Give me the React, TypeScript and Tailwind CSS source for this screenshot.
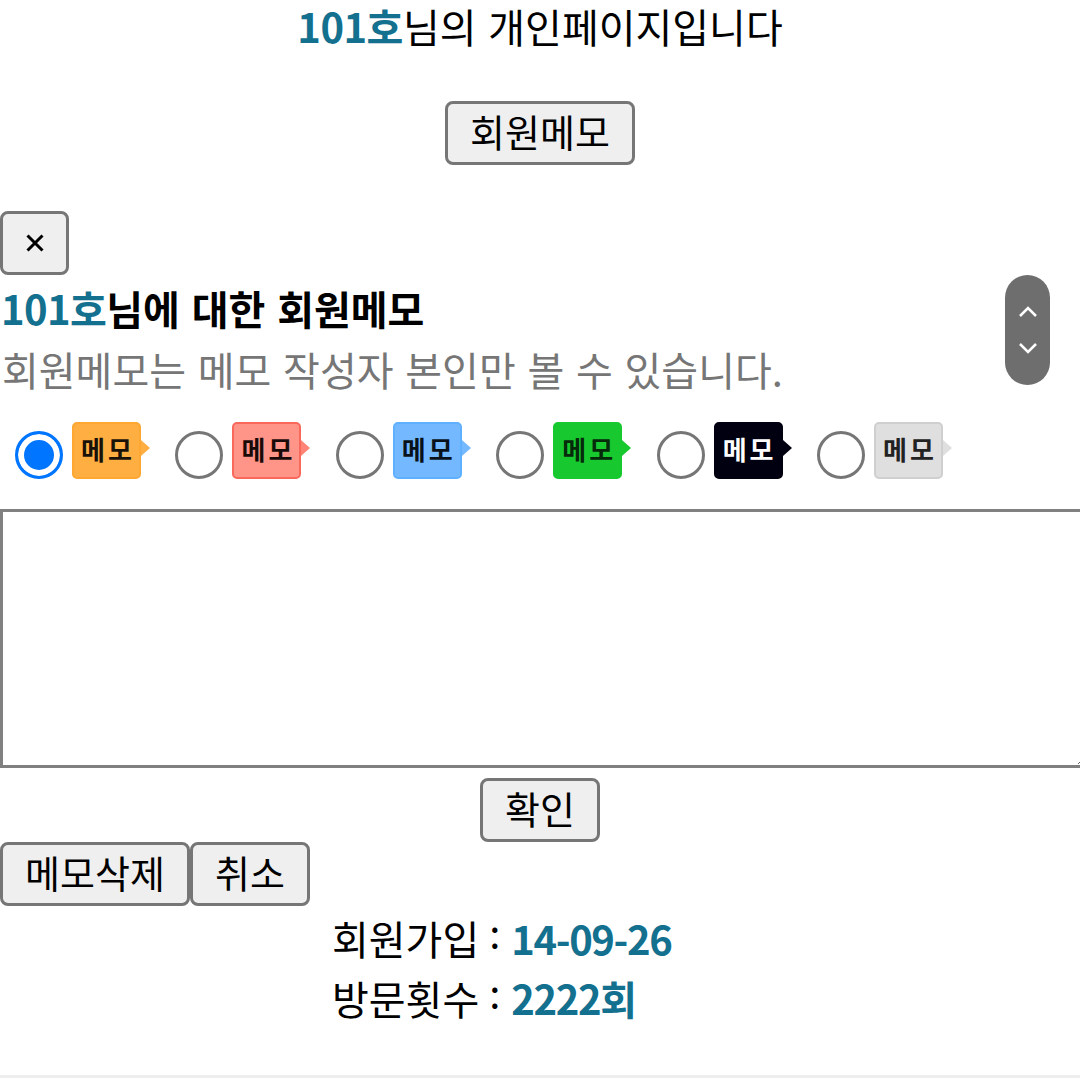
const FONT = "font-['Noto_Sans_CJK_KR','Noto_Sans',sans-serif]";

const memoTypes = [
  { bg: 'bg-[#ffae42]', border: 'border-[#ffa733]', arrow: 'border-l-[#ffae42]', text: 'text-[#1a1208]' },
  { bg: 'bg-[#ff9488]', border: 'border-[#f8695c]', arrow: 'border-l-[#ff8476]', text: 'text-[#1a0a08]' },
  { bg: 'bg-[#74b9ff]', border: 'border-[#5fb0ff]', arrow: 'border-l-[#74b9ff]', text: 'text-[#08121c]' },
  { bg: 'bg-[#17c92f]', border: 'border-[#17c92f]', arrow: 'border-l-[#17c92f]', text: 'text-[#062b0b]' },
  { bg: 'bg-[#000010]', border: 'border-[#000010]', arrow: 'border-l-[#000010]', text: 'text-white' },
  { bg: 'bg-[#dfdfdf]', border: 'border-[#cfcfcf]', arrow: 'border-l-[#dfdfdf]', text: 'text-[#222222]' },
];

function Btn({ children, className = '' }: { children: React.ReactNode; className?: string }) {
  return (
    <button className={`h-[64px] pb-[5px] border-[3px] border-[#767676] rounded-[8px] bg-[#efefef] text-black text-[38px] leading-none ${className}`}>
      {children}
    </button>
  );
}

function InfoRow({ label, value }: { label: string; value: string }) {
  return (
    <div className="flex items-center h-[60px] pb-[5px]">
      <span>{label}</span>
      <span className="ml-[10px] mr-[11px] text-[40px] leading-[30px] pb-[14px]">:</span>
      <span className="font-bold tracking-[-1.4px] text-[#13708f]">{value}</span>
    </div>
  );
}

export default function App() {
  return (
    <div className={`${FONT} relative w-[1080px] h-[1080px] overflow-hidden bg-white text-black [word-spacing:2.8px]`}>
      <div className="h-[56px] pb-[5px] flex items-center justify-center text-[40px] leading-[48px]">
        <span className="font-bold text-[#13708f] tracking-[-0.5px]">101호</span>
        <span>님의 개인페이지입니다</span>
      </div>

      <div className="flex justify-center mt-[45px]">
        <Btn className="w-[190px]">회원메모</Btn>
      </div>

      <div className="mt-[46px]">
        <Btn className="w-[69px] !pb-0 flex items-center justify-center">
          <svg width="18" height="18" viewBox="0 0 18 18" fill="none" stroke="black" strokeWidth="3">
            <path d="M1.5 1.5 L16.5 16.5 M16.5 1.5 L1.5 16.5" />
          </svg>
        </Btn>
      </div>

      <div className="mt-[10px] h-[50px] pb-[5px] flex items-center text-[40px] leading-[48px] font-bold pl-[1px]">
        <span className="text-[#13708f] tracking-[-0.6px]">101호</span>
        <span>님에 대한 회원메모</span>
      </div>
      <div className="mt-[10px] h-[50px] pb-[3px] flex items-center text-[40px] leading-[48px] text-[#767676] pl-[2px]">
        회원메모는 메모 작성자 본인만 볼 수 있습니다.
      </div>

      <div className="mt-[25px] h-[60px] pl-[15px] flex">
        {memoTypes.map((m, i) => (
          <label key={i} className="w-[160.4px] shrink-0 flex items-start gap-[9px]">
            <input
              type="radio"
              name="memoType"
              defaultChecked={i === 0}
              className="appearance-none mt-[11px] w-[48px] h-[48px] rounded-full border-[3px] border-[#767676] bg-white checked:border-[#0075ff] checked:bg-[#0075ff] checked:shadow-[inset_0_0_0_6px_white]"
            />
            <span className="flex items-center">
              <span className={`w-[69px] h-[57px] mt-[2px] pb-[3px] pl-[3px] rounded-[5px] border-2 ${m.bg} ${m.border} ${m.text} flex items-center justify-center text-[26px] leading-none font-bold tracking-[3px]`}>
                메모
              </span>
              <span className={`w-0 h-0 -mt-[3px] border-y-[8px] border-y-transparent border-l-[9px] ${m.arrow}`} />
            </span>
          </label>
        ))}
      </div>

      <textarea className="block mt-[29px] w-[1089px] h-[259px] border-[3px] border-[#808080] bg-white" />

      <div className="flex justify-center mt-[10px]">
        <Btn className="w-[120px]">확인</Btn>
      </div>

      <div className="flex">
        <Btn className="w-[190px]">메모삭제</Btn>
        <Btn className="w-[120px]">취소</Btn>
      </div>

      <div className="mt-[4px] pl-[332px] text-[40px] leading-[60px]">
        <InfoRow label="회원가입" value="14-09-26" />
        <InfoRow label="방문횟수" value="2222회" />
      </div>

      <div className="mt-[45px] h-[3px] bg-[#eeeeee]" />

      {/* floating page scroll pill */}
      <div className="absolute left-[1005px] top-[275px] w-[45px] h-[110px] rounded-full bg-[#6e6e6e] flex flex-col items-center justify-center gap-[26px]">
        <svg width="20" height="12" viewBox="0 0 20 12" fill="none" stroke="white" strokeWidth="2.5">
          <path d="M2 11 L10 3 L18 11" />
        </svg>
        <svg width="20" height="12" viewBox="0 0 20 12" fill="none" stroke="white" strokeWidth="2.5">
          <path d="M2 1 L10 9 L18 1" />
        </svg>
      </div>
    </div>
  );
}
